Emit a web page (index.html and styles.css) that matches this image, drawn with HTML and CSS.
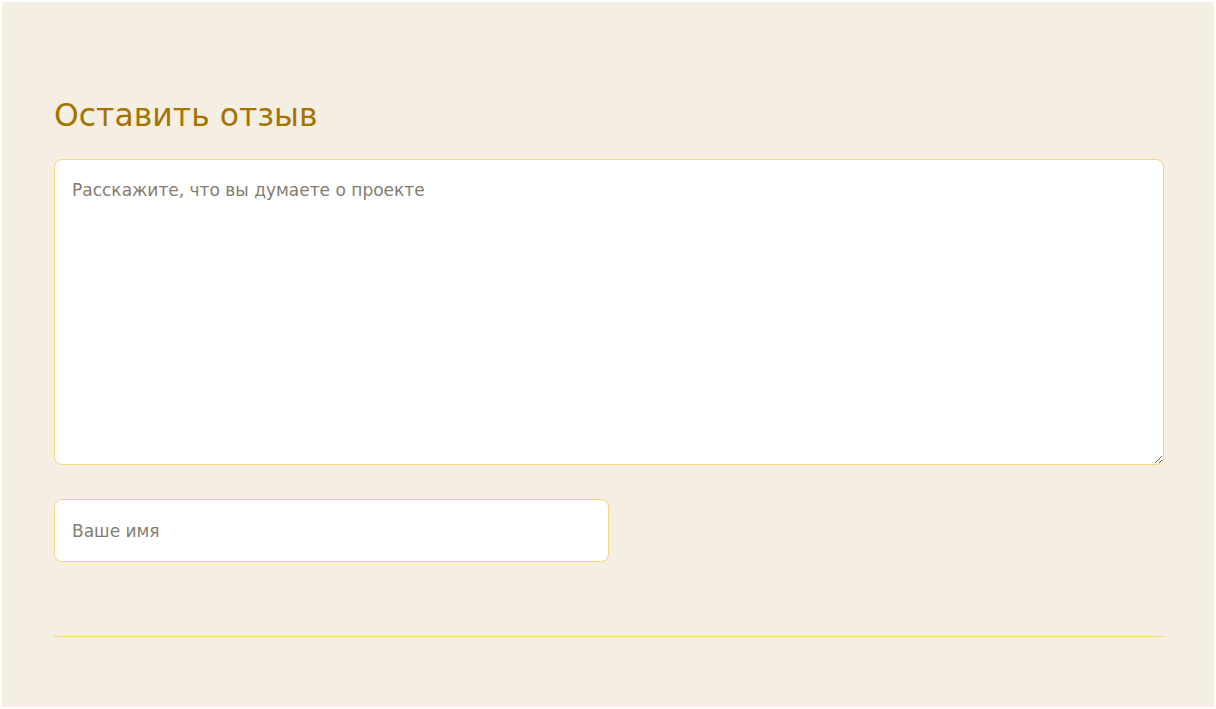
FILE: index.html
```html
<!DOCTYPE html>
<html lang="ru">
<head>
<meta charset="utf-8">
<title>Оставить отзыв</title>
<link rel="stylesheet" href="styles.css">
</head>
<body>
<section class="review">
  <h2 class="review__title">Оставить отзыв</h2>
  <form class="review__form">
    <textarea class="review__text" placeholder="Расскажите, что вы думаете о проекте"></textarea>
    <input class="review__name" type="text" placeholder="Ваше имя">
  </form>
  <hr class="review__line">
</section>
</body>
</html>
```

FILE: styles.css
```css
html, body {
  margin: 0;
  padding: 0;
  background: #ffffff;
}
body {
  padding: 2px;
  height: 709px;
  box-sizing: border-box;
  font-family: "DejaVu Sans", sans-serif;
}
.review {
  background: #f5eee3;
  height: 100%;
  box-sizing: border-box;
  padding: 94px 50px 0 52px;
}
.review__title {
  margin: 0;
  font-weight: 400;
  font-size: 31.5px;
  line-height: 38px;
  color: #a47300;
}
.review__form {
  margin-top: 25px;
  display: flex;
  flex-direction: column;
  gap: 34px;
  align-items: flex-start;
}
.review__text,
.review__name {
  font-family: inherit;
  font-size: 17px;
  color: #5a5147;
  background: #ffffff;
  border: 1px solid #f7d583;
  border-radius: 8px;
  box-sizing: border-box;
  padding: 19px 17px;
  outline: none;
}
.review__text {
  width: 100%;
  height: 306px;
  resize: vertical;
  display: block;
  line-height: 22px;
}
.review__name {
  width: 555px;
  height: 63px;
}
.review__text::placeholder,
.review__name::placeholder {
  color: #857c70;
  opacity: 1;
}
.review__line {
  margin: 74px 0 0;
  border: 0;
  border-top: 1px solid #fcd570;
  height: 0;
}
```
